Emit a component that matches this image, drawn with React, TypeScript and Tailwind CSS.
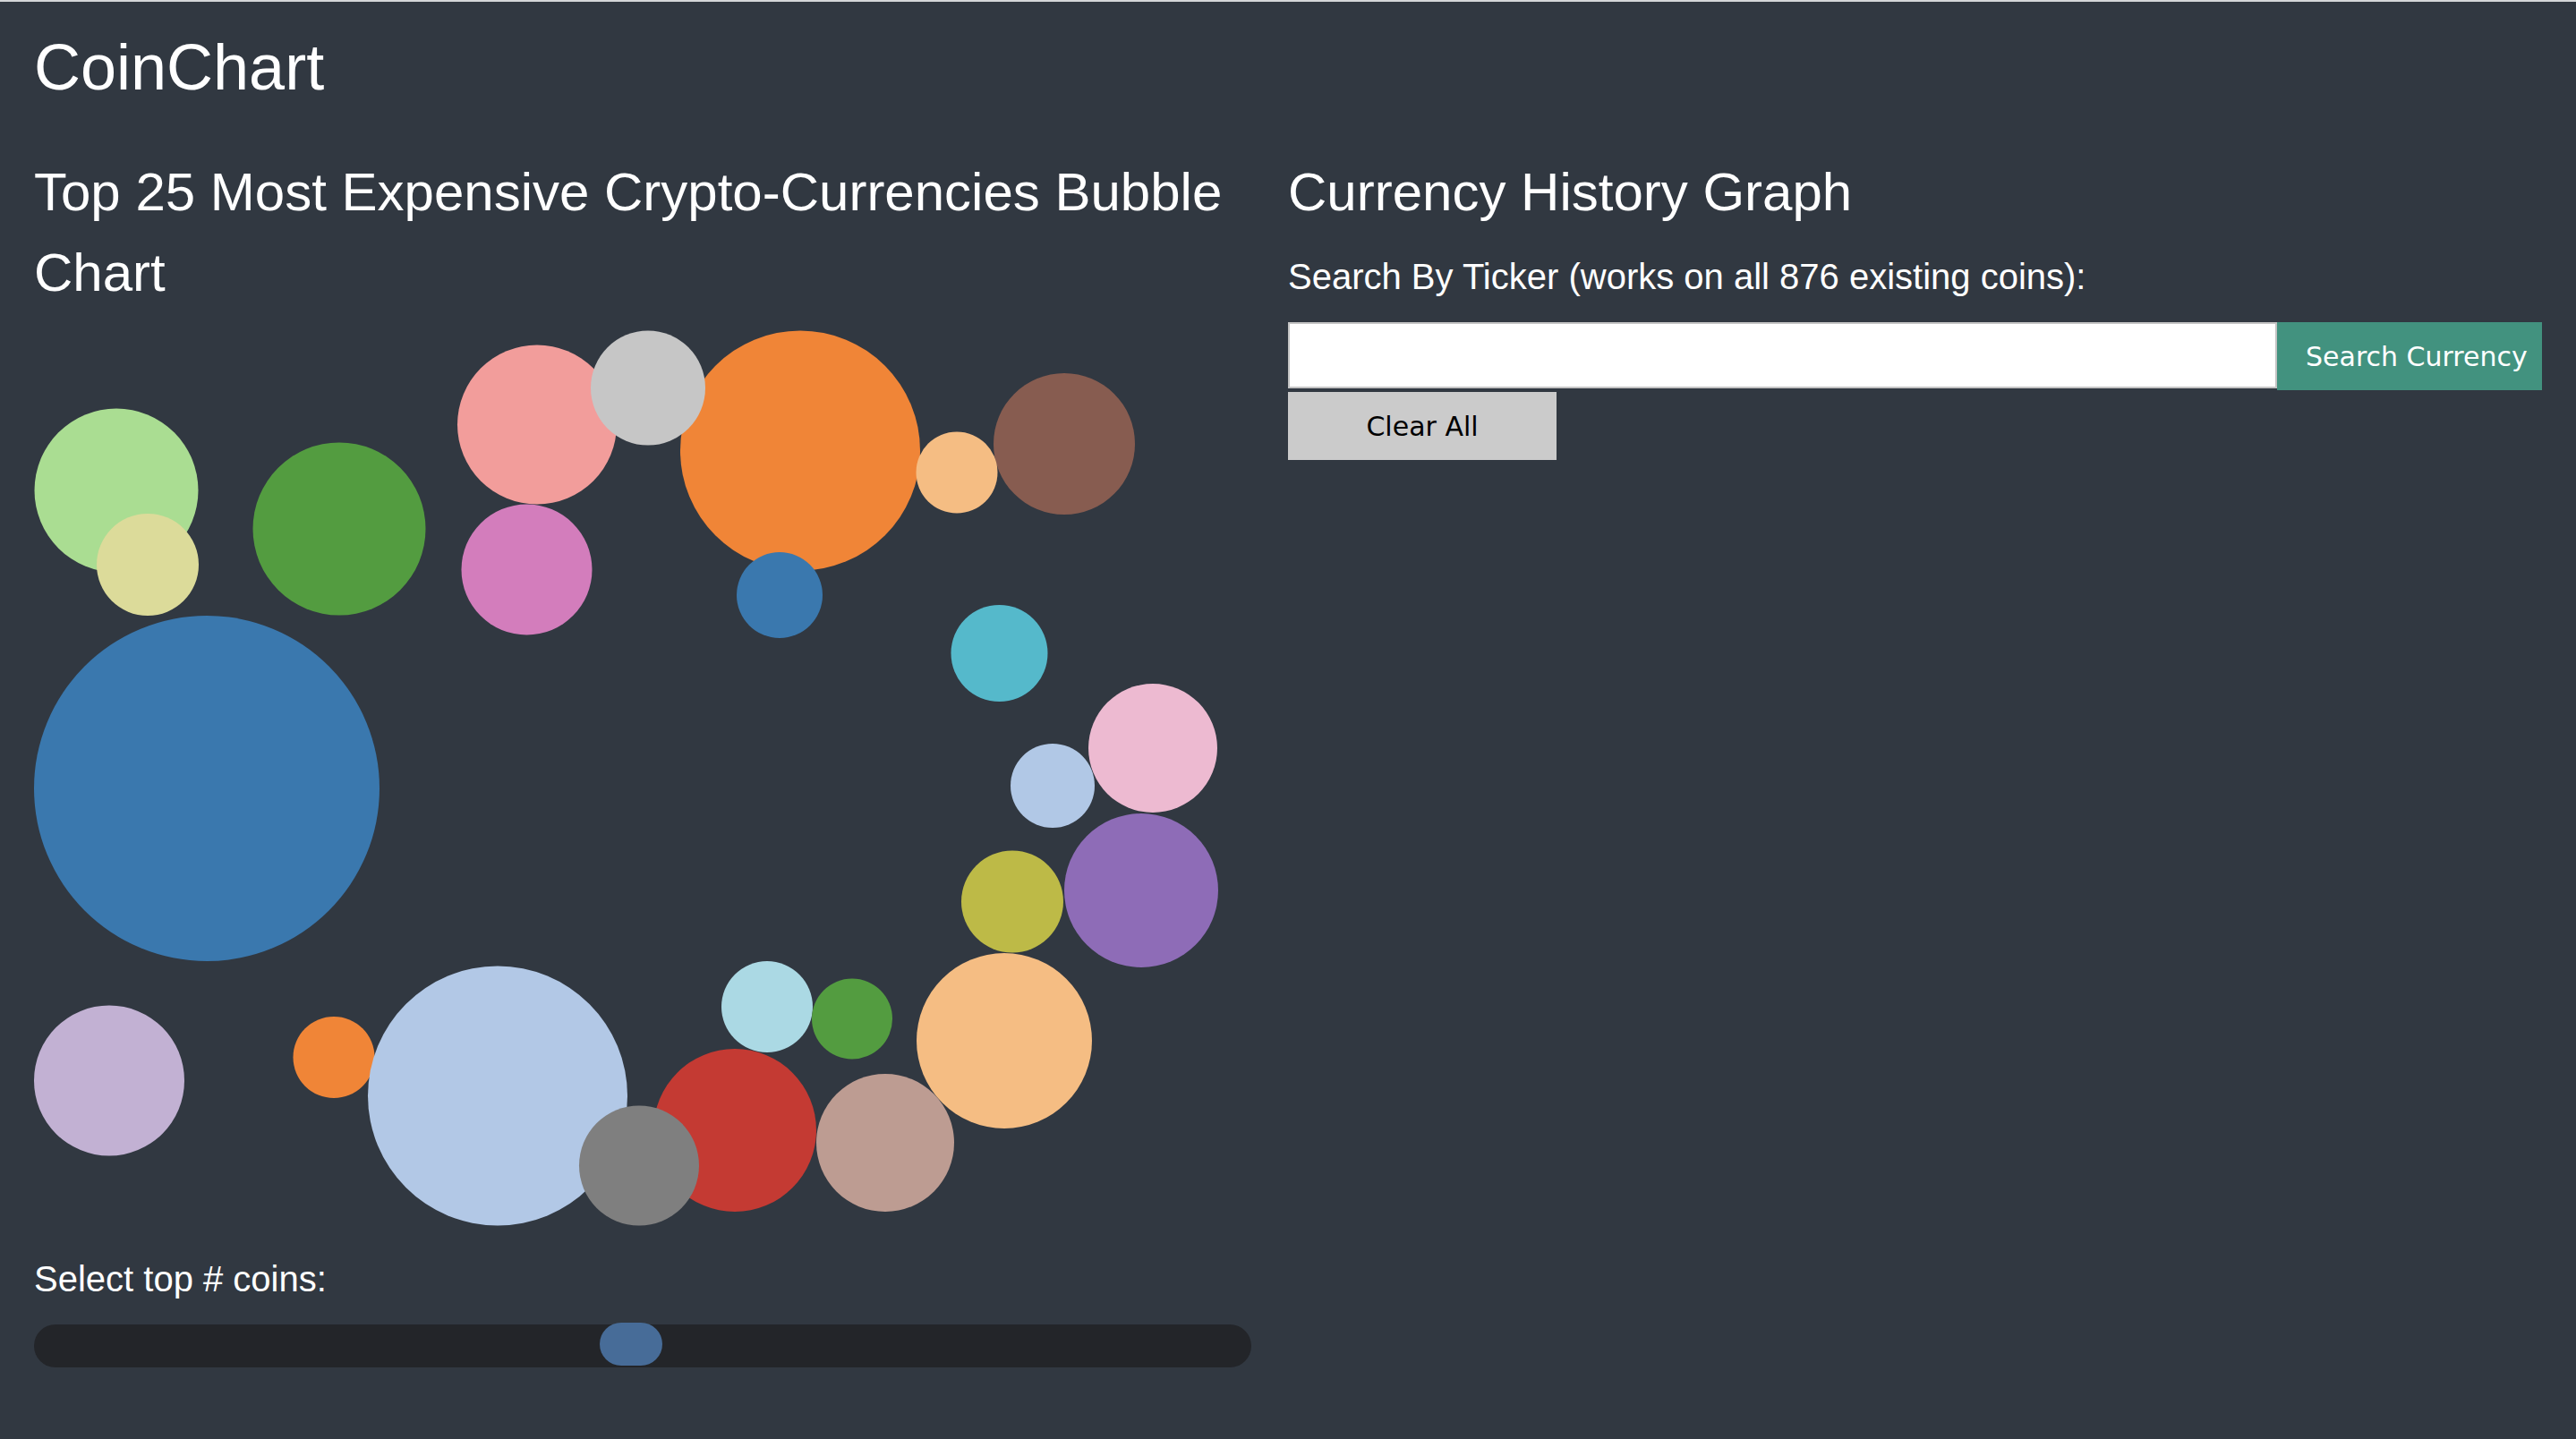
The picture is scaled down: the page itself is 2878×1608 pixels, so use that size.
import React from "react";

type Bubble = { cx: number; cy: number; r: number; fill: string };

// positions are page pixels; the svg starts at (38, 350)
const bubbles: Bubble[] = [
  { cx: 130, cy: 548, r: 91.5, fill: "#aadd92" },
  { cx: 165, cy: 631, r: 57, fill: "#dcdb9a" },
  { cx: 379, cy: 591, r: 96.5, fill: "#539c40" },
  { cx: 600, cy: 474.5, r: 89, fill: "#f29d9b" },
  { cx: 894, cy: 503.5, r: 134, fill: "#f08537" },
  { cx: 724, cy: 433.5, r: 64, fill: "#c6c6c6" },
  { cx: 871, cy: 665, r: 48, fill: "#3a78ae" },
  { cx: 1189, cy: 496, r: 79, fill: "#875c50" },
  { cx: 1069, cy: 528, r: 45.5, fill: "#f5bd83" },
  { cx: 588.5, cy: 636.5, r: 73, fill: "#d37dbc" },
  { cx: 1116.5, cy: 730, r: 54, fill: "#55b9cb" },
  { cx: 1288, cy: 836, r: 72, fill: "#edbad1" },
  { cx: 1176, cy: 878, r: 47, fill: "#b1c8e6" },
  { cx: 1275, cy: 995, r: 86, fill: "#8e6cb7" },
  { cx: 1131, cy: 1007.5, r: 57, fill: "#bdba47" },
  { cx: 231, cy: 881, r: 193, fill: "#3a78ae" },
  { cx: 122, cy: 1207.5, r: 84, fill: "#c2b1d3" },
  { cx: 373, cy: 1181.5, r: 45.5, fill: "#f08537" },
  { cx: 556, cy: 1224.5, r: 145, fill: "#b2c8e6" },
  { cx: 821, cy: 1263, r: 91, fill: "#c43a33" },
  { cx: 714, cy: 1302.5, r: 67, fill: "#7f7f7f" },
  { cx: 857, cy: 1125, r: 51, fill: "#abd9e4" },
  { cx: 952, cy: 1138.5, r: 45, fill: "#539c40" },
  { cx: 1122, cy: 1163, r: 98, fill: "#f5bd83" },
  { cx: 989, cy: 1277, r: 77, fill: "#bd9c92" },
];

function BubbleChart() {
  return (
    <svg width={1400} height={1055} className="block">
      {bubbles.map((b, i) => (
        <circle key={i} cx={b.cx - 38} cy={b.cy - 350} r={b.r} fill={b.fill} />
      ))}
    </svg>
  );
}

function Slider() {
  return (
    <div className="relative h-[48px] w-[1360px] rounded-full bg-[#232529]">
      <div className="absolute left-[632px] top-[-2px] h-[48px] w-[70px] rounded-full bg-[#476c98]" />
    </div>
  );
}

export default function App() {
  return (
    <main
      className="min-h-screen w-full border-t-2 border-[#d4d6d8] bg-[#313841] px-[38px] text-white"
      style={{ fontFamily: '"Liberation Sans", Arial, sans-serif' }}
    >
      <h1 className="mt-[33px] text-[72px] leading-[80px]">CoinChart</h1>

      <div className="mt-[55px] grid grid-cols-2">
        <section className="flex flex-col">
          <h2 className="text-[60px] leading-[90px]">
            Top 25 Most Expensive Crypto-Currencies Bubble Chart
          </h2>
          <BubbleChart />
          <p className="text-[40px] leading-[48px]">Select top # coins:</p>
          <div className="mt-[27px]">
            <Slider />
          </div>
        </section>

        <section className="flex flex-col">
          <h2 className="text-[60px] leading-[90px]">Currency History Graph</h2>
          <label className="mt-[25px] text-[40px] leading-[48px]">
            Search By Ticker (works on all 876 existing coins):
          </label>
          <div className="mt-[27px] flex items-start">
            <input
              type="text"
              className="h-[74px] flex-1 border-2 border-[#c4c4c4] bg-white px-2 text-black outline-none"
            />
            <button
              className="flex h-[76px] w-[296px] items-center bg-[#42927f] pl-[32px] text-[30px] text-white"
              style={{ fontFamily: '"DejaVu Sans", Verdana, sans-serif' }}
            >
              Search Currency
            </button>
          </div>
          <button
            className="mt-[2px] h-[76px] w-[300px] bg-[#cbcbcb] text-[30px] text-black"
            style={{ fontFamily: '"DejaVu Sans", Verdana, sans-serif' }}
          >
            Clear All
          </button>
        </section>
      </div>
    </main>
  );
}
